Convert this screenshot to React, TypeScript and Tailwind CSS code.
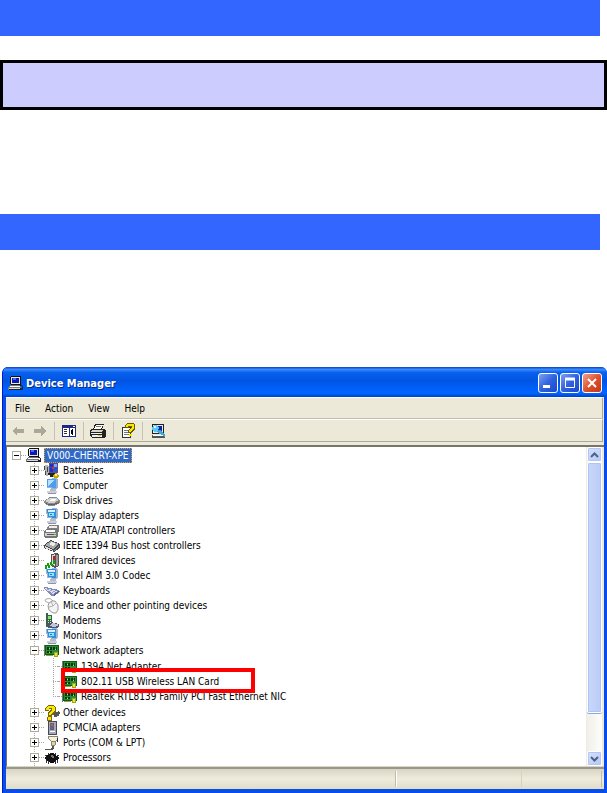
import type { ReactNode } from "react";

type IconName =
  | "pc" | "battery" | "monitor" | "disk" | "display" | "ide" | "bus" | "infrared"
  | "keyboard" | "mouse" | "modem" | "card" | "question" | "pcmcia" | "port" | "chip";

const art: Record<IconName, ReactNode> = {
  pc: (
    <>
      <path d="M3 1h9l1 1v7l-1 1H3L2 9V2z" fill="#111" />
      <path d="M3 2h9v7H3z" fill="#ece9d8" />
      <path d="M4 3h7v5H4z" fill="#0a18b8" />
      <path d="M5 3h3v2H5z" fill="#3a6cff" />
      <path d="M2 10h10l1 3v2H0v-2z" fill="#77777a" />
      <path d="M2 11h10v1H2z" fill="#fff" />
      <path d="M1 13h11v1H1z" fill="#d8d8d4" />
      <path d="M1 14h11v1H1z" fill="#222" />
      <path d="M12 10h2v1h-2zM14 11h1v3h-1zM12 13h3v2h-3z" fill="#222" />
    </>
  ),
  battery: (
    <>
      <path d="M1 2h3v1h1v8H4v2H2V8H1z" fill="#b4b4b4" />
      <path d="M0 3h1v4H0zM1 8h1v4H1zM3 4h1v5H3z" fill="#444" />
      <path d="M5 0h8l1 1v9H5z" fill="#505090" />
      <path d="M6 1h3v3H6zM6 5h3v4H6z" fill="#1034d8" />
      <path d="M10 1h3v3h-3z" fill="#7ea8f8" />
      <path d="M8 4h2v2H8z" fill="#e03020" />
      <path d="M10 5h3v3h-3z" fill="#2850e8" />
      <path d="M4 10h8v2h-2v2H6v-2H4z" fill="#222" />
      <path d="M9 12l3-2 3 2v2l-3 2-3-2z" fill="#c8a800" />
      <path d="M11 11h2v2h-2z" fill="#fff28a" />
    </>
  ),
  monitor: (
    <>
      <path d="M3 1l9-1 2 2v8l-3 1-8-1z" fill="#9db4d0" />
      <path d="M3 1h9v9l-9-1z" fill="#4b9df0" />
      <path d="M4 2h7l-7 6z" fill="#b4e0ff" />
      <path d="M6 11h6v2H6z" fill="#b8bcc8" />
      <path d="M3 13h9l2 1-3 2H5l-3-2z" fill="#c9cedb" />
      <path d="M4 15h8v1H4z" fill="#8d94a6" />
    </>
  ),
  disk: (
    <>
      <path d="M0 8l6-4h6l4 3v3l-6 3H5L0 10z" fill="#8b8b8b" />
      <path d="M1 8l5-3h6l3 2-5 3H5z" fill="#d2d2d2" />
      <path d="M5 7l3-1h3l1 1-3 1H6z" fill="#fff" />
      <path d="M1 10l4 1h5l5-2v1l-5 2H5z" fill="#5f5f5f" />
    </>
  ),
  display: (
    <>
      <path d="M2 1l11-1 1 2v8l-3 1-8-1z" fill="#a4b4cc" />
      <path d="M3 1h9v9l-8-1z" fill="#2f8fe4" />
      <path d="M4 2h7v2H4z" fill="#d7efff" />
      <path d="M5 5h5v3H5z" fill="#8fe6f8" />
      <path d="M6 6h2v1H6z" fill="#2470c8" />
      <path d="M6 11h6v2H6z" fill="#b8bcc8" />
      <path d="M3 13h9l2 1-3 2H5l-3-2z" fill="#c9cedb" />
      <path d="M4 15h8v1H4z" fill="#8d94a6" />
    </>
  ),
  ide: (
    <>
      <path d="M5 2h9l1 1v6h-3V6H3V4z" fill="#808080" />
      <path d="M5 3h8v2H5z" fill="#efefef" />
      <path d="M2 6h10l2 2v6l-2 1H1l-1-1V8z" fill="#777" />
      <path d="M2 7h9v2H2z" fill="#fff" />
      <path d="M1 10h11v3H1z" fill="#d0d0d0" />
      <path d="M3 11h7v1H3z" fill="#555" />
      <path d="M10 11h2v1h-2z" fill="#4ac04a" />
    </>
  ),
  bus: (
    <>
      <path d="M0 7l7-5 9 4v4l-6 4L0 10z" fill="#484848" />
      <path d="M1 7l6-4 8 3-6 5z" fill="#a9a9a9" />
      <path d="M5 6l3-2 4 2-3 2z" fill="#eee" />
      <path d="M1 8l8 4v1L1 10z" fill="#ddd" />
      <path d="M10 12l5-4v1l-5 4z" fill="#888" />
    </>
  ),
  infrared: (
    <>
      <path d="M7 1l5-1 3 1v12l-4 2-4-2z" fill="#555" />
      <path d="M8 2l3-1v12l-3-1z" fill="#d8d8d8" />
      <path d="M9 3h2v5H9z" fill="#d01818" />
      <path d="M12 2h2v11h-2z" fill="#999" />
      <path d="M1 12h2v-2h2v2h1V9h2v2h1V7h2v4H9v2H7v-1H6v3H4v-2H3v3H1z" fill="#12a012" />
    </>
  ),
  keyboard: (
    <>
      <path d="M0 4h2l13 3 1 2-6 4H8L0 6z" fill="#8489b4" />
      <path d="M1 5l12 3 1 0-5 3L1 6z" fill="#dcdff4" />
      <path d="M3 6h2v1H3zM6 7h2v1H6zM9 8h2v1H9zM5 8h1v1H5zM8 9h1v1H8z" fill="#9aa0c8" />
      <path d="M9 12l6-4v1l-5 4z" fill="#5d628c" />
    </>
  ),
  mouse: (
    <g shapeRendering="auto">
      <path d="M5 5L1 3l1-2 4-.5 3 2.500" fill="none" stroke="#aaa" />
      <path d="M5 5l3-2h3l3 4v5l-2 3H9l-4-3-1-4z" fill="#f4f4f4" stroke="#999" />
      <path d="M5 9l4-1 3-3M9 8L7.500 4" fill="none" stroke="#b0b0b0" />
    </g>
  ),
  modem: (
    <>
      <path d="M2 0h2v2h4v11H3L2 12z" fill="#3c5f48" />
      <path d="M4 3h3v3H4z" fill="#7ef06a" />
      <path d="M4 7h1v1H4zM6 7h1v1H6zM4 9h1v1H4zM6 9h1v1H6z" fill="#d8e4d8" />
      <path d="M7 9l8 2v3l-4 2-9-2v-2h5z" fill="#50566c" />
      <path d="M8 10l6 1v2l-4 1-5-1z" fill="#c0c6dc" />
    </>
  ),
  card: (
    <>
      <path d="M0 2h1v11H0z" fill="#777" />
      <path d="M1 2h14v10H1z" fill="#0d5c14" />
      <path d="M2 3h12v8H2z" fill="#2a8c34" />
      <path d="M3 4h2v3H3zM6 4h2v3H6zM9 4h2v3H9zM12 4h1v3h-1zM3 8h2v2H3zM6 8h2v2H6z" fill="#07350c" />
      <path d="M5 5h1v1H5zM11 6h1v1h-1zM5 9h1v1H5z" fill="#9ae89a" />
      <path d="M10 9h4v5h-4z" fill="#9ca814" />
      <path d="M11 10h2v3h-2z" fill="#dfe450" />
      <path d="M2 12h7v1H2z" fill="#9c9c40" />
    </>
  ),
  question: (
    <>
      <path d="M9 8l6-2 1 2-1 3-5 1z" fill="#555" />
      <path d="M1 3l3-3h5l3 3v4L8 10v2H4V7l4-3H5v2H1z" fill="#7a6800" />
      <path d="M2 3l2-2h5l2 2v3L7 9v1H5V8l3-3V3H5v2H2z" fill="#ffe600" />
      <path d="M3 12h5v4H3z" fill="#7a6800" />
      <path d="M4 12h3v3H4z" fill="#ffe600" />
    </>
  ),
  pcmcia: (
    <>
      <path d="M4 1h9v14H4z" fill="#4a4a56" />
      <path d="M5 2h7v12H5z" fill="#a8a8b4" />
      <path d="M6 3h4v7H6z" fill="#5c6484" />
      <path d="M7 4h2v2H7z" fill="#e05040" />
      <path d="M6 11h5v1H6z" fill="#fff" />
    </>
  ),
  port: (
    <>
      <path d="M4 1h10v3l-2 3v3l-2 1H7V7L4 4z" fill="#8c8770" />
      <path d="M5 2h8v2l-2 2H8L5 4z" fill="#f5f1dc" />
      <path d="M8 7h3v3H8z" fill="#d8d2b4" />
      <path d="M8 11h2v2l-2 2H1v-1h6l1-2z" fill="#555" />
      <path d="M13 3h1v4h-1z" fill="#333" />
    </>
  ),
  chip: (
    <>
      <path d="M0 8l7-5h2l7 5-7 5H7z" fill="#111" />
      <path d="M4 3h1v2H4zM11 3h1v2h-1zM2 10h1v3H2zM4 11h1v3H4zM11 11h1v3h-1zM13 10h1v3h-1zM1 5h2v1H1zM13 5h2v1h-2z" fill="#333" />
      <path d="M6 6l2-1 3 2-2 1z" fill="#777" />
    </>
  ),
};

function Icon({ name }: { name: IconName }) {
  return (
    <svg viewBox="0 0 16 16" className="size-4 shrink-0" shapeRendering="crispEdges" aria-hidden="true">
      {art[name]}
    </svg>
  );
}

function Expander({ open, label }: { open?: boolean; label: string }) {
  return (
    <button
      type="button"
      aria-label={(open ? "Collapse " : "Expand ") + label}
      className="flex size-[9px] shrink-0 items-center justify-center border border-[#b0ac9c] bg-white"
    >
      <svg viewBox="0 0 5 5" className="size-[5px]" shapeRendering="crispEdges" aria-hidden="true">
        <path d={open ? "M0 2h5v1H0z" : "M0 2h5v1H0zM2 0h1v5H2z"} fill="#000" />
      </svg>
    </button>
  );
}

const Dots = () => <span className="w-[5px] shrink-0 border-t border-dotted border-[#a8a8a8]" />;

type Device = { label: string; icon: IconName; children?: string[] };

const devices: Device[] = [
  { label: "Batteries", icon: "battery" },
  { label: "Computer", icon: "monitor" },
  { label: "Disk drives", icon: "disk" },
  { label: "Display adapters", icon: "display" },
  { label: "IDE ATA/ATAPI controllers", icon: "ide" },
  { label: "IEEE 1394 Bus host controllers", icon: "bus" },
  { label: "Infrared devices", icon: "infrared" },
  { label: "Intel AIM 3.0 Codec", icon: "display" },
  { label: "Keyboards", icon: "keyboard" },
  { label: "Mice and other pointing devices", icon: "mouse" },
  { label: "Modems", icon: "modem" },
  { label: "Monitors", icon: "display" },
  {
    label: "Network adapters",
    icon: "card",
    children: ["1394 Net Adapter", "802.11 USB Wireless LAN Card", "Realtek RTL8139 Family PCI Fast Ethernet NIC"],
  },
  { label: "Other devices", icon: "question" },
  { label: "PCMCIA adapters", icon: "pcmcia" },
  { label: "Ports (COM & LPT)", icon: "port" },
  { label: "Processors", icon: "chip" },
];

const highlighted = "802.11 USB Wireless LAN Card";

function DeviceTree() {
  return (
    <div className="min-w-0 grow overflow-hidden pl-1 whitespace-nowrap">
      <div className="flex h-4 items-center">
        <Expander open label="V000-CHERRY-XPE" />
        <Dots />
        <Icon name="pc" />
        <span className="ml-[2px] border border-dotted border-[#e0a040] bg-[#316ac5] px-[2px] leading-[13px] text-white">
          V000-CHERRY-XPE
        </span>
      </div>
      <ul className="bg-[repeating-linear-gradient(to_bottom,#a8a8a8_0_1px,transparent_1px_2px)] bg-[length:1px_100%] bg-[position:22px_0] bg-no-repeat pl-[18px]">
        {devices.map((d) => (
          <li key={d.label}>
            <div className="flex h-[15px] items-center">
              <Expander open={!!d.children} label={d.label} />
              <Dots />
              <Icon name={d.icon} />
              <span className="ml-[3px]">{d.label}</span>
            </div>
            {d.children && (
              <ul className="bg-[repeating-linear-gradient(to_bottom,#a8a8a8_0_1px,transparent_1px_2px)] bg-[length:1px_40px] bg-[position:23px_0] bg-no-repeat py-px pl-[23px]">
                {d.children.map((c) => (
                  <li key={c} className="relative flex h-[15px] items-center">
                    <Dots />
                    <span className="w-1 shrink-0 border-t border-dotted border-[#a8a8a8]" />
                    <Icon name="card" />
                    <span className="ml-[3px]">{c}</span>
                    {c === highlighted && (
                      <span className="absolute -top-[6px] left-2 z-10 h-[25px] w-[194px] border-4 border-[#ff0000]" />
                    )}
                  </li>
                ))}
              </ul>
            )}
          </li>
        ))}
        <li aria-hidden="true" className="h-2 pt-px pl-[18px]">
          <span className="block h-1 w-2 rounded-t-full bg-[#444]" />
        </li>
      </ul>
    </div>
  );
}

function ScrollArrow({ label, d }: { label: string; d: string }) {
  return (
    <button
      type="button"
      aria-label={label}
      className="flex h-[15px] items-center justify-center rounded-[2px] border border-white bg-linear-to-br from-[#d6e2fd] to-[#b4c8f8] shadow-[inset_0_0_0_1px_#b2c5f5]"
    >
      <svg viewBox="0 0 9 6" className="h-[6px] w-[9px]" aria-hidden="true">
        <path d={d} fill="none" stroke="#4d6185" strokeWidth="2" />
      </svg>
    </button>
  );
}

function CaptionButton({ label, close, children }: { label: string; close?: boolean; children: ReactNode }) {
  return (
    <button
      type="button"
      aria-label={label}
      className={
        "size-5 rounded-[3px] border border-white " +
        (close
          ? "bg-linear-to-br from-[#f0a088] via-[#e0502c] to-[#c03818]"
          : "bg-linear-to-br from-[#7d9ff0] via-[#2f62e0] to-[#1c48c8]")
      }
    >
      <svg viewBox="0 0 18 18" className="size-[18px]" fill="none" stroke="#fff" aria-hidden="true">
        {children}
      </svg>
    </button>
  );
}

const Separator = () => <span className="h-[18px] w-px bg-[#c5c2b2]" />;

function Tool({ label, disabled, children }: { label: string; disabled?: boolean; children: ReactNode }) {
  return (
    <button type="button" aria-label={label} disabled={disabled} className="size-4">
      <svg viewBox="0 0 16 16" className="size-4" shapeRendering="crispEdges" aria-hidden="true">
        {children}
      </svg>
    </button>
  );
}

export default function App() {
  return (
    <main className="bg-white font-['DejaVu_Sans_Condensed','DejaVu_Sans',sans-serif] text-[10px] leading-[15px] text-black">
      <div className="mr-[7px] h-9 bg-[#3366ff]" />
      <div className="mt-6 h-[50px] border-3 border-black bg-[#ccccff]" />
      <div className="mt-26 mr-[7px] h-9 bg-[#3366ff]" />

      <section
        aria-label="Device Manager"
        className="mt-[117px] ml-[2px] overflow-hidden rounded-t-[6px] border-l border-[#0019cf] bg-[#0a4ce8]"
      >
        <header className="flex h-[30px] items-center gap-[2px] bg-[linear-gradient(to_bottom,#0a3fc0_0%,#3a8cff_8%,#0a62ee_18%,#0054e3_45%,#0060fa_75%,#0066ff_88%,#003fc4_100%)] pt-[2px] pr-[5px] pl-[5px]">
          <Icon name="pc" />
          <h1 className="grow text-[11px] font-bold text-white [text-shadow:1px_1px_#0a2a80]">Device Manager</h1>
          <CaptionButton label="Minimize"><path d="M4 12.5h7" strokeWidth="3" /></CaptionButton>
          <CaptionButton label="Maximize"><path d="M4.500 5v8.500h9V5" /><path d="M4 5h10" strokeWidth="3" /></CaptionButton>
          <CaptionButton label="Close" close><path d="M5 5l8 8M13 5l-8 8" strokeWidth="2" /></CaptionButton>
        </header>

        <div className="mr-[3px] mb-1 ml-[3px] bg-[#ece9d8]">
          <nav aria-label="Menu" className="mr-px flex h-[22px] items-center gap-[15px] border-t border-r border-b border-t-white border-r-[#aca899] border-b-[#c0bdae] pl-[9px]">
            {["File", "Action", "View", "Help"].map((m) => (
              <button key={m} type="button">{m}</button>
            ))}
          </nav>
          <div role="toolbar" aria-label="Tools" className="mr-px flex h-[23px] items-center border-t border-r border-b border-t-white border-r-[#aca899] border-b-[#aca899] pl-[5px]">
            <div className="flex gap-[5px]">
              <Tool label="Back" disabled><path d="M1 8l5-5v3h7v4H6v3z" fill="#aca899" /></Tool>
              <Tool label="Forward" disabled><path d="M14 8L9 3v3H2v4h7v3z" fill="#aca899" /></Tool>
            </div>
            <div className="mr-[6px] ml-[6px] flex"><Separator /></div>
            <Tool label="Show or hide console tree">
              <path d="M1 2h14v12H1z" fill="#1c2a88" />
              <path d="M2 5h6v8H2zM9 5h5v8H9z" fill="#fff" />
              <path d="M3 6h3v1H3zM3 8h3v1H3zM3 10h3v1H3z" fill="#333" />
              <path d="M12 6v6h-1v-1h-1V7h1V6z" fill="#000" />
              <path d="M12 3h2v1h-2z" fill="#fff" />
            </Tool>
            <div className="mr-[6px] ml-[6px] flex"><Separator /></div>
            <Tool label="Print">
              <path d="M5 1h9l-2 5H3z" fill="#222" />
              <path d="M6 2h7l-2 4H4z" fill="#fff" />
              <path d="M6 3h5v1H6z" fill="#777" />
              <path d="M1 6h13l2 1v6l-2 2H2l-2-2V8z" fill="#222" />
              <path d="M2 7h11l-1 2H1z" fill="#d8d5c4" />
              <path d="M1 10h11v1H1zM2 12h10v2H2z" fill="#eee" />
              <path d="M8 12h3v1H8z" fill="#e0c800" />
            </Tool>
            <div className="mr-[7px] ml-[7px] flex"><Separator /></div>
            <Tool label="Help">
              <path d="M1 4h9v11H1z" fill="#333" />
              <path d="M2 5h7v9H2z" fill="#fff" />
              <path d="M3 7h5v1H3zM3 9h5v1H3zM3 11h5v1H3z" fill="#777" />
              <path d="M4 2l2-2h6l2 2v4l-3 3v1H7V7l3-3H8v1H4z" fill="#6a5c00" />
              <path d="M5 2l2-1h5l1 1v3l-3 3v1H8V7l3-3V3H7v1H5zM8 11h3v2H8z" fill="#ffe600" />
            </Tool>
            <div className="mr-2 ml-[5px] flex"><Separator /></div>
            <Tool label="Scan for hardware changes">
              <path d="M1 1h12v10H1z" fill="#222" />
              <path d="M2 2h10v8H2z" fill="#e8e8e8" />
              <path d="M3 3h8v6H3z" fill="#1020a0" />
              <path d="M1 12h13v3H1z" fill="#555" />
              <path d="M2 12h11v1H2z" fill="#fff" />
              <path d="M1 4l2-2h3l2 3-1 3-3 1-3-2z" fill="#58c8f4" />
              <path d="M3 3h2v2H3z" fill="#d8f6ff" />
              <path d="M7 7l2 0 5 5v2L6 9z" fill="#38a8d8" />
            </Tool>
          </div>

          <div className="mt-[3px] flex h-[322px] border-t-2 border-b border-l border-t-[#77756a] border-b-[#d8d5c6] border-l-[#77756a] bg-white pl-px">
            <DeviceTree />
            <div className="flex w-4 shrink-0 flex-col border-l border-[#eeede5] bg-linear-to-r from-[#f0efe8] to-[#fefefb]">
              <ScrollArrow label="Scroll up" d="M1 5l3.500-3.500L8 5" />
              <div className="h-[251px] rounded-[2px] border border-white bg-linear-to-r from-[#c9d8fc] to-[#b9cbf8] shadow-[inset_0_0_0_1px_#b0c4f4,0_1px_#8ea8e0]" />
              <div className="grow" />
              <ScrollArrow label="Scroll down" d="M1 1l3.500 3.500L8 1" />
            </div>
            <div className="w-[2px] bg-[#ece9d8]" />
          </div>

          <footer className="flex h-[22px] border-t-2 border-[#9a978a] bg-linear-to-b from-[#d8d5c4] via-[#efecde] to-[#dfdcc8] py-[2px]">
            <div className="grow border-r border-[#c0bdae]" />
            <div className="w-[126px] border-r border-l border-r-[#d5d2c2] border-l-white" />
            <div className="mr-[2px] w-20 border-r border-[#c0bdae]" />
          </footer>
        </div>
      </section>
    </main>
  );
}
